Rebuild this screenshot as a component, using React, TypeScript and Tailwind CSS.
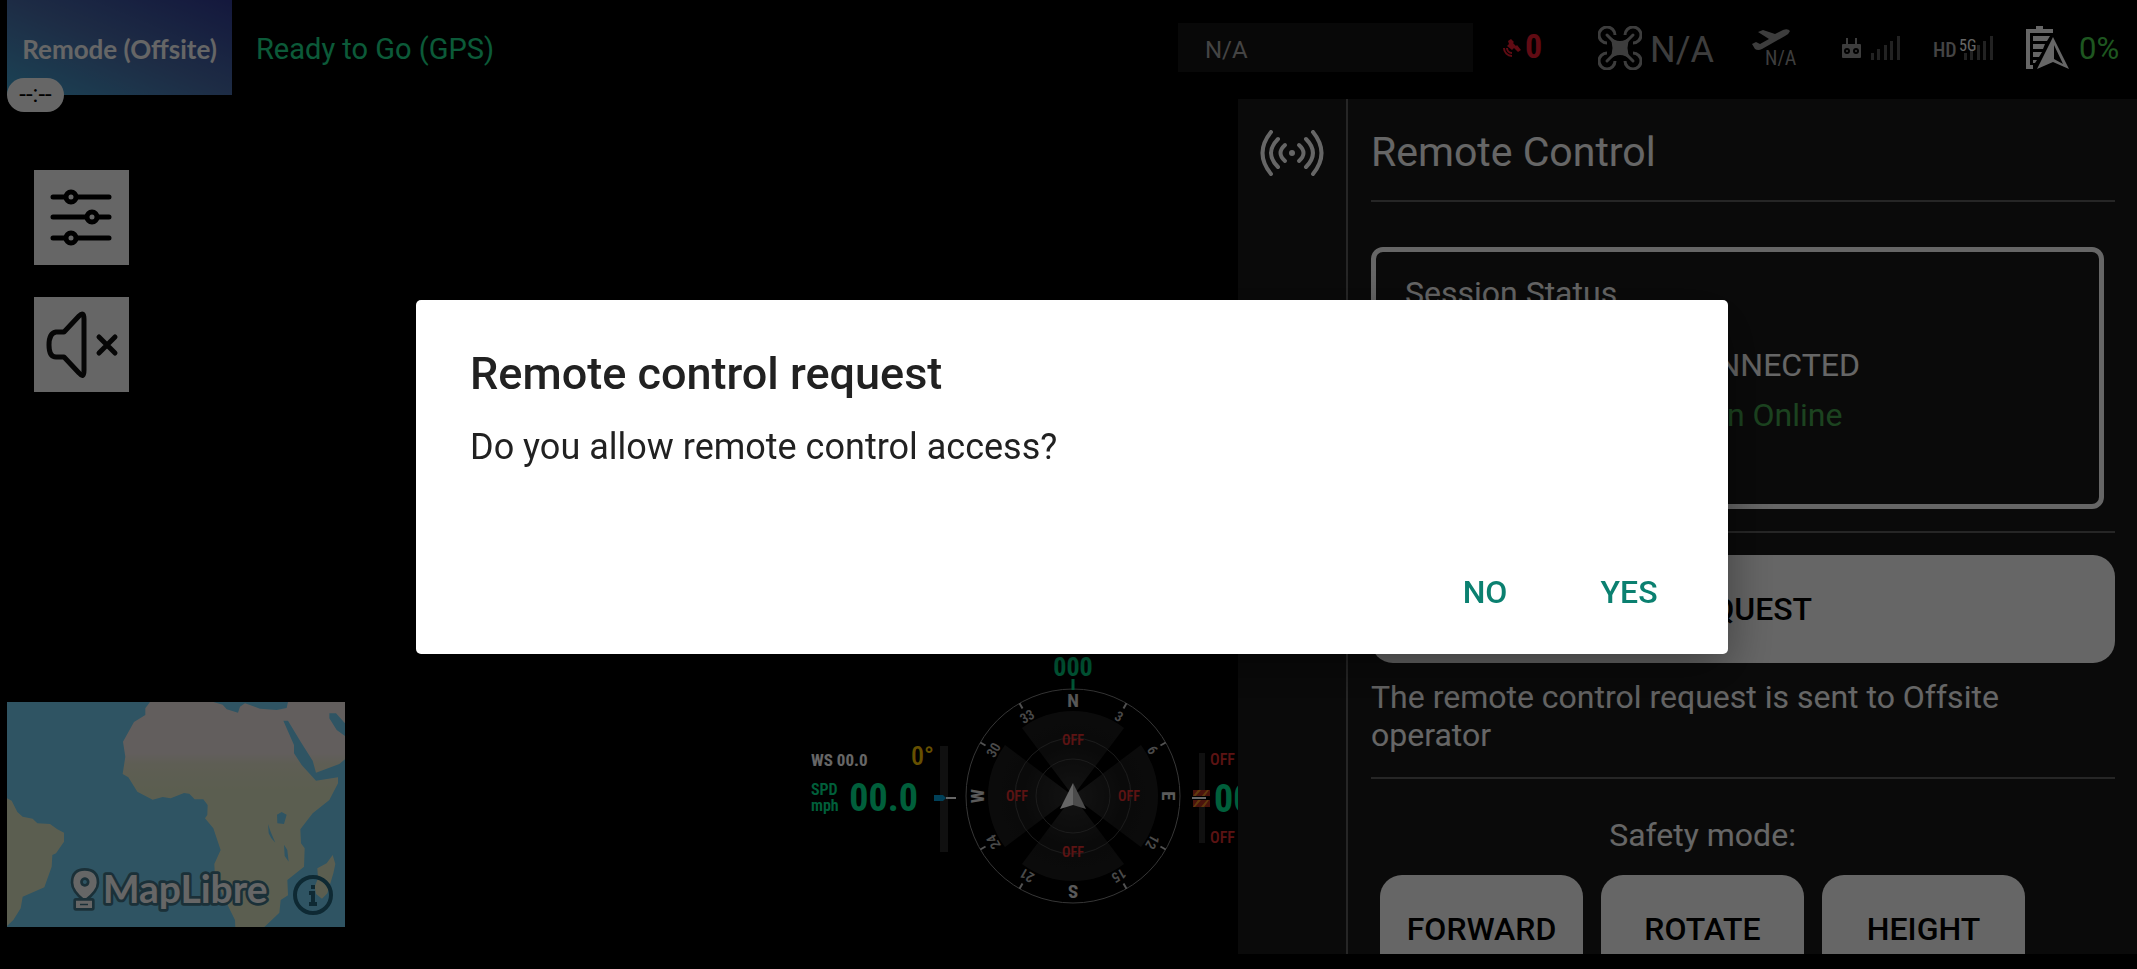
import type { ReactNode } from 'react'

const hudFont = "font-['Roboto_Condensed','Liberation_Sans_Narrow',Roboto,sans-serif]"

const dialLabels = [
  { text: 'N', angle: 0 },
  { text: '3', angle: 30 },
  { text: '6', angle: 60 },
  { text: 'E', angle: 90 },
  { text: '12', angle: 120 },
  { text: '15', angle: 150 },
  { text: 'S', angle: 180 },
  { text: '21', angle: 210 },
  { text: '24', angle: 240 },
  { text: 'W', angle: 270 },
  { text: '30', angle: 300 },
  { text: '33', angle: 330 },
]

const safetyModes = ['FORWARD', 'ROTATE', 'HEIGHT']

function DroneIcon() {
  return (
    <svg viewBox="0 0 44 44" className="w-11 h-11 shrink-0" fill="none" stroke="currentColor" strokeWidth="3">
      <path d="M17 9A8 8 0 1 0 9 17" />
      <path d="M27 9A8 8 0 1 1 35 17" />
      <path d="M17 35A8 8 0 1 1 9 27" />
      <path d="M27 35A8 8 0 1 0 35 27" />
      <path d="M9 9l8 8M35 9l-8 8M9 35l8-8M35 35l-8-8" strokeLinecap="round" />
      <path
        d="M11 10Q22 20 33 10Q26 22 33 34Q22 24 11 34Q18 22 11 10z"
        fill="currentColor"
        stroke="none"
      />
    </svg>
  )
}

function SatelliteIcon() {
  return (
    <svg viewBox="0 0 18 18" className="w-[18px] h-[18px]" fill="none" stroke="currentColor">
      <path d="M5 2l3-2 3 3-1 1 3 3 1-1 4 5-3 2-4-4-2 2-5-4 2-2z" fill="currentColor" stroke="none" />
      <path d="M1 9a8 8 0 0 0 8 8M4 9a5 5 0 0 0 5 5" strokeWidth="2" />
    </svg>
  )
}

function TakeoffIcon() {
  return (
    <svg viewBox="0 0 38 21" className="w-[38px] h-[21px]" fill="currentColor">
      <path d="M6 3l5-2 12 4 8-4q5-2 7 1-1 3-5 5L10 20q-4 2-7 0L0 15l4-2 4 2 9-5z" />
    </svg>
  )
}

function ControllerIcon() {
  return (
    <svg viewBox="0 0 19 20" className="w-[19px] h-5" fill="currentColor">
      <path d="M4 0h2v6h7V0h2v6h3q1 0 1 1v12q0 1-1 1H1q-1 0-1-1V7q0-1 1-1h3z" />
      <circle cx="5" cy="13" r="3" className="fill-black" />
      <circle cx="14" cy="13" r="3" className="fill-black" />
      <circle cx="5" cy="13" r="1" />
      <circle cx="14" cy="13" r="1" />
    </svg>
  )
}

function SignalBars() {
  return (
    <svg viewBox="0 0 29 24" className="w-[29px] h-6" fill="#555">
      <path d="M0 17h3v7H0zM6 13h3v11H6zM13 9h3v15h-3zM19 5h3v19h-3zM26 0h3v24h-3z" />
    </svg>
  )
}

function BatteryIcon() {
  return (
    <svg viewBox="0 0 43 43" className="w-[43px] h-[43px]" fill="currentColor">
      <path d="M10 0h7v3h10v4H4v32h3v4H0V3h10z" />
      <path d="M7 10h17l-3 5H7zM7 18h12l-2 5H7zM7 26h9l-3 5H7zM7 34h4l-2 3H7z" />
      <path fillRule="evenodd" d="M27 11l16 32-16-7-16 7zm1 8v14l9 5z" />
    </svg>
  )
}

function BroadcastIcon() {
  return (
    <svg viewBox="0 0 64 46" className="w-16 h-[46px]" fill="none" stroke="currentColor" strokeWidth="4" strokeLinecap="round">
      <circle cx="32" cy="23" r="3" fill="currentColor" stroke="none" />
      <path d="M25 15q-9 8 0 16M39 15q9 8 0 16" />
      <path d="M18 9q-14 14 0 28M46 9q14 14 0 28" />
      <path d="M11 2q-17 21 0 42M53 2q17 21 0 42" />
    </svg>
  )
}

function SlidersIcon() {
  return (
    <svg viewBox="0 0 95 95" className="w-full h-full" fill="none" stroke="black" strokeWidth="5" strokeLinecap="round">
      <path d="M19 27h11M44 27h31M19 47h32M65 47h10M19 68h11M44 68h31" />
      <circle cx="37" cy="27" r="5" />
      <circle cx="58" cy="47" r="5" />
      <circle cx="37" cy="68" r="5" />
    </svg>
  )
}

function MutedIcon() {
  return (
    <svg viewBox="0 0 95 95" className="w-full h-full" fill="none" stroke="#111" strokeWidth="5" strokeLinecap="round" strokeLinejoin="round">
      <path d="M30 35L45 19Q50 14 50 22V73Q50 82 45 76L30 60H22Q15 60 15 48T22 35z" />
      <path d="M65 40l16 16M81 40L65 56" />
    </svg>
  )
}

function MiniMap() {
  return (
    <div className="relative w-[338px] h-[225px] shrink-0">
      <svg viewBox="21 36 1014 675" className="w-full h-full" preserveAspectRatio="none">
        <defs>
          <linearGradient id="land" gradientUnits="userSpaceOnUse" x1="0" y1="190" x2="0" y2="300">
            <stop offset="0" stopColor="#f5ece8" />
            <stop offset="0.3" stopColor="#ebebd2" />
            <stop offset="1" stopColor="#e4ecc8" />
          </linearGradient>
        </defs>
        <path d="M21 36h1014v675H21z" fill="#75d2f7" />
        <path
          fill="url(#land)"
          d="M450 36L436 55 436 75 402 96 369 155 376 200 368 252 385 262 412 305 458 329 488 321 512 325 552 309 568 311 584 328 610 328 623 345 622 375 615 385 640 415 662 480 643 522 645 560 668 615 705 690 706 711H793L838 668 842 630 864 616 862 570 912 530 914 475 903 460 901 418 938 370 988 330 1014 280V262L948 272 905 225 882 190 882 165 850 92 864 92 902 155 938 212 948 248 1018 222 1035 208V138L1010 120 988 85V70L1008 70 1035 100V36H864L860 54 830 60 780 56 735 40 720 50 714 68 680 58 668 44 640 36z"
        />
        <path
          fill="#e4ecc8"
          d="M21 325L35 332 52 366 68 380 98 386 112 400 150 402 172 418 192 428V455L168 490 157 495 155 530 133 592 68 620 62 655 40 690 21 708z"
        />
        <path fill="#e4ecc8" d="M998 495L1006 522 1000 550 982 610 966 626 948 612 944 590 954 565 952 535 980 520z" />
        <path fill="#75d2f7" d="M831 374L845 366 860 374 852 402 832 400zM804 402L812 425 826 458 814 445 806 430zM852 464L862 480 866 515 854 498z" />
        <g fill="#fff" stroke="#44788c" strokeWidth="16" paintOrder="stroke" strokeLinejoin="round">
          <path fillRule="evenodd" d="M254 542q36 0 36 36 0 22-36 50-34-28-34-50 0-36 34-36zm0 20a14 14 0 1 0 1 0z" />
          <path fillRule="evenodd" d="M228 632h48v22h-48zm12 9v5h24v-5z" />
          <text x="308" y="640" fontSize="117" className="font-['Lato',sans-serif] font-bold">
            MapLibre
          </text>
        </g>
      </svg>
      <a href="#attribution" aria-label="Map attribution" className="absolute right-3 bottom-3 size-10">
        <svg viewBox="0 0 40 40" className="w-full h-full" fill="none" stroke="#23677f" strokeWidth="4">
          <circle cx="20" cy="20" r="18" />
          <path d="M16 18h4v11M16 29h8" />
          <path d="M18 12h4" />
        </svg>
      </a>
    </div>
  )
}

function Compass() {
  return (
    <div className="relative size-[216px] shrink-0">
      <div className="absolute -top-[33px] inset-x-0 text-center text-[26px] leading-6 font-bold text-[#00ee95]">
        000
      </div>
      <svg viewBox="-108 -108 216 216" className="w-full h-full overflow-visible">
        <defs>
          <radialGradient id="sector" gradientUnits="userSpaceOnUse" cx="0" cy="0" r="85">
            <stop offset="0" stopColor="#303030" />
            <stop offset="0.6" stopColor="#1a1a1a" />
            <stop offset="1" stopColor="#1d1d1d" />
          </radialGradient>
        </defs>
        <circle r="107" fill="none" stroke="#888" />
        {[0, 90, 180, 270].map((angle) => (
          <path key={angle} d="M0 0L-51 -68A85 85 0 0 1 51 -68z" fill="url(#sector)" transform={`rotate(${angle})`} />
        ))}
        <circle r="37" fill="none" stroke="#484848" />
        <circle r="58" fill="none" stroke="#484848" />
        {dialLabels.map(({ text, angle }) => {
          const cardinal = angle % 90 === 0
          return (
            <g key={text} transform={`rotate(${angle})`}>
              {!cardinal && <path d="M0 -107v6" stroke="#ccc" strokeWidth="2" />}
              <text
                y={cardinal ? -89 : -87}
                textAnchor="middle"
                fill={cardinal ? '#e0e0e0' : '#b8b8b8'}
                className={cardinal ? 'text-[19px] font-bold' : 'text-[14px] font-semibold'}
              >
                {text}
              </text>
            </g>
          )
        })}
        <path d="M0 -117v11" stroke="#00ee95" strokeWidth="3" />
        <g fill="#e53030" textAnchor="middle" className="text-[14px] font-semibold">
          <text y="-51">OFF</text>
          <text y="61">OFF</text>
          <text x="-56" y="5">OFF</text>
          <text x="56" y="5">OFF</text>
        </g>
        <path d="M0 -13L-13 13 0 9z" fill="#fff" />
        <path d="M0 -13L13 13 0 9z" fill="#bbb" />
      </svg>
    </div>
  )
}

function Hud() {
  return (
    <div className={`ml-auto mb-[23px] flex w-[427px] shrink-0 items-start overflow-x-clip ${hudFont}`}>
      <div className="w-[123px] shrink-0 pt-[52px]">
        <div className="flex items-center justify-between">
          <span className="pt-2 text-[17px] leading-6 font-bold text-white">WS 00.0</span>
          <span className="text-[26px] leading-7 font-medium text-[#ffc800]">0°</span>
        </div>
        <div className="mt-1.5 flex items-center justify-between pr-4 text-[#00ee95]">
          <span className="text-base leading-4 font-semibold">
            SPD
            <br />
            mph
          </span>
          <span className="text-[38px] leading-10 font-bold">00.0</span>
        </div>
      </div>
      <svg viewBox="0 0 22 106" className="mt-[58px] h-[106px] w-[22px] shrink-0">
        <path d="M6 0h8v106H6z" fill="#2a2a2a" />
        <path d="M0 49h9l3 3-3 3H0z" fill="#00a0dc" />
        <path d="M12 52h10" stroke="#fff" strokeWidth="2" />
      </svg>
      <div className="w-[9px] shrink-0" />
      <Compass />
      <div className="w-[11px] shrink-0" />
      <svg viewBox="0 0 18 90" className="mt-[65px] h-[90px] w-[18px] shrink-0">
        <path d="M7 0h6v90H7z" fill="#2a2a2a" />
        <path d="M1 37h17v17H1z" fill="#b83020" />
        <path d="M1 43l5-6h3l-6 7H1zM9 44l6-7h2l-5 7zM1 54l5-7h3l-6 7zM9 54l6-7h2l-5 7z" fill="#f09020" />
        <path d="M0 45h18" stroke="#000" strokeWidth="4" />
        <path d="M0 45h14" stroke="#fff" strokeWidth="2" />
      </svg>
      <div className="w-[28px] shrink-0 pt-16">
        <div className="text-base leading-4 font-medium text-[#e53030]">OFF</div>
        <div className="py-[11px] pl-1 text-[38px] leading-10 font-bold text-[#00ee95]">00.0</div>
        <div className="text-base leading-4 font-medium text-[#e53030]">OFF</div>
      </div>
    </div>
  )
}

function Header() {
  return (
    <header className="mb-1 flex h-[95px] shrink-0 items-center text-[#999]">
      <div className="relative flex h-full w-[225px] items-center justify-center bg-gradient-to-tr from-[#40a8d4] via-[#4a6eac] to-[#333c98]">
        <span className="pt-1 font-['Lato',sans-serif] text-[26px] font-bold whitespace-nowrap text-white">
          Remode (Offsite)
        </span>
        <span className="absolute left-0 top-[78px] h-[34px] w-[57px] rounded-full bg-white text-center text-2xl leading-8 text-black">
          --:--
        </span>
      </div>
      <div className="ml-6 pt-1 text-[29px] text-[#1ee090]">Ready to Go (GPS)</div>
      <div className="ml-auto mr-[30px] flex h-[49px] w-[295px] items-center bg-[#141414] pl-[27px] pt-1 text-2xl text-[#aaa]">
        N/A
      </div>
      <div className={`flex w-[95px] items-center gap-1 text-[#f01c30] ${hudFont}`}>
        <SatelliteIcon />
        <span className="pb-1 text-[34px] leading-9 font-bold">0</span>
      </div>
      <div className="flex w-[154px] items-center gap-2 text-4xl">
        <DroneIcon />
        <span className="pt-1">N/A</span>
      </div>
      <div className={`flex w-[90px] flex-col ${hudFont}`}>
        <TakeoffIcon />
        <span className="ml-[13px] text-xl leading-4">N/A</span>
      </div>
      <div className="flex w-[91px] items-center gap-2.5">
        <ControllerIcon />
        <SignalBars />
      </div>
      <div className={`relative flex w-[93px] items-center ${hudFont}`}>
        <span className="w-[31px] pt-1 text-xl font-medium text-[#aaa]">HD</span>
        <SignalBars />
        <span className="absolute left-[26px] top-1.5 text-base leading-4 text-white">5G</span>
      </div>
      <div className="flex w-[111px] items-center gap-2.5 text-white">
        <BatteryIcon />
        <span className="pt-1 text-[31px] text-[#4bd850]">0%</span>
      </div>
    </header>
  )
}

function PanelButton({ children, className }: { children: ReactNode; className: string }) {
  return (
    <button type="button" className={`h-[108px] rounded-[22px] bg-white text-[32px] font-medium text-black ${className}`}>
      {children}
    </button>
  )
}

function RemoteControlPanel() {
  return (
    <aside className="flex w-[899px] shrink-0 overflow-hidden bg-[#1a1a1a] text-[32px] leading-[38px] text-white">
      <nav className="w-[110px] shrink-0 border-r-2 border-[#606060] pt-[31px]">
        <button type="button" aria-label="Remote control" className="mx-auto block">
          <BroadcastIcon />
        </button>
      </nav>
      <section className="flex-1 pl-[23px] pr-[22px]">
        <h1 className="flex h-[101px] items-center pt-1 text-[41px]">Remote Control</h1>
        <hr className="border-t-2 border-[#606060]" />
        <div className="mr-[11px] mt-[45px] h-[262px] rounded-xl border-5 border-white pt-[22px]">
          <h2 className="pl-[29px]">Session Status</h2>
          <div className="-mr-[11px] mt-7 text-center leading-[50px]">
            <p>DISCONNECTED</p>
            <p className="text-[#46a850]">Station Online</p>
          </div>
        </div>
        <hr className="mt-[22px] border-t-2 border-[#606060]" />
        <PanelButton className="mt-[22px] w-full">REQUEST</PanelButton>
        <p className="mt-[15px] pb-[23px]">The remote control request is sent to Offsite operator</p>
        <hr className="border-t-2 border-[#606060]" />
        <div className="w-fit">
          <h2 className="pb-[21px] pt-[37px] text-center">Safety mode:</h2>
          <div className="flex gap-[18px] px-[9px]">
            {safetyModes.map((mode) => (
              <PanelButton key={mode} className="w-[203px]">
                {mode}
              </PanelButton>
            ))}
          </div>
        </div>
      </section>
    </aside>
  )
}

function RequestDialog() {
  return (
    <div className="fixed inset-0 flex items-center justify-center bg-black/60 pb-[15px] pl-[7px]">
      <div
        role="dialog"
        aria-labelledby="dialog-title"
        className="w-[1312px] max-w-full rounded-[5px] bg-white text-[#212121] shadow-[0_16px_50px_rgba(0,0,0,0.4)]"
      >
        <div className="px-[54px] pt-[46px]">
          <h2 id="dialog-title" className="text-[45px] leading-[56px] font-medium">
            Remote control request
          </h2>
          <p className="mt-[23px] text-4xl leading-[44px]">Do you allow remote control access?</p>
        </div>
        <div className="mt-[69px] flex justify-end pr-[27px] pb-[8px] text-[32px] font-medium text-[#0b8070]">
          <button type="button" className="h-[108px] min-w-36">NO</button>
          <button type="button" className="h-[108px] min-w-36">YES</button>
        </div>
      </div>
    </div>
  )
}

export default function App() {
  return (
    <div className="flex h-screen flex-col overflow-hidden bg-black pb-[15px] pl-[7px] font-['Roboto',sans-serif]">
      <Header />
      <div className="flex min-h-0 flex-1">
        <main className="flex min-w-0 flex-1 flex-col">
          <div className="flex flex-col gap-8 pl-[27px] pt-[71px]">
            <button type="button" aria-label="Settings" className="size-[95px] bg-white">
              <SlidersIcon />
            </button>
            <button type="button" aria-label="Unmute" className="size-[95px] bg-white">
              <MutedIcon />
            </button>
          </div>
          <div className="mt-auto flex items-end pb-[27px]">
            <MiniMap />
            <Hud />
          </div>
        </main>
        <RemoteControlPanel />
      </div>
      <RequestDialog />
    </div>
  )
}
